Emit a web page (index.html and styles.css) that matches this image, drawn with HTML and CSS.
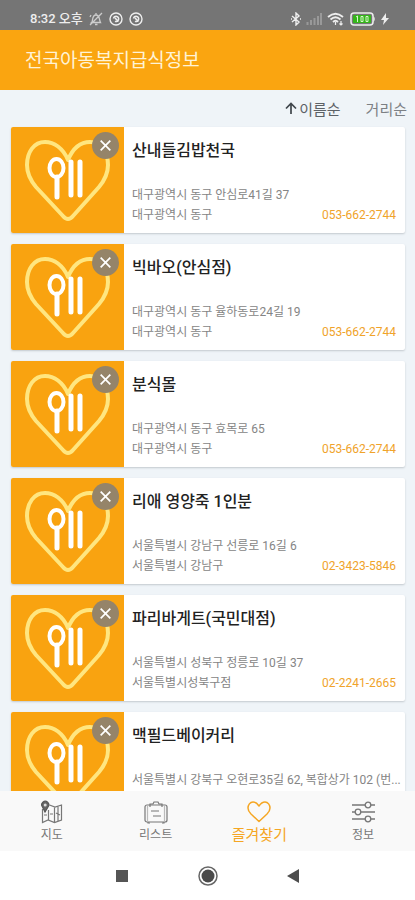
FILE: index.html
```html
<!DOCTYPE html>
<html lang="ko">
<head>
<meta charset="utf-8">
<meta name="viewport" content="width=device-width, initial-scale=1">
<title>전국아동복지급식정보</title>
<link rel="stylesheet" href="styles.css">
</head>
<body>
<svg class="defs" aria-hidden="true">
  <symbol id="meal" viewBox="0 0 113 106">
    <path d="M57 33C52 21 43 15 34 15C23 15 16 25 16 38C16 48 20 54 25 60L52 89Q57 95 62 89L88 60C93 54 97 48 97 38C97 25 90 15 79 15C70 15 62 21 57 33Z" fill="none" stroke="#ffe680" stroke-width="4" stroke-linejoin="round"/>
    <ellipse cx="45.500" cy="41" rx="7" ry="9" fill="none" stroke="#fff" stroke-width="4"/>
    <path d="M46 50V70M60 35V68M69 35V68" fill="none" stroke="#fff" stroke-width="5" stroke-linecap="round"/>
  </symbol>
  <symbol id="close" viewBox="0 0 28 28">
    <path d="M9 9L19 19M19 9L9 19" fill="none" stroke="#fff" stroke-width="1.800"/>
  </symbol>
  <symbol id="talk" viewBox="0 0 14 14">
    <circle cx="7" cy="7" r="6" fill="none" stroke="#eee" stroke-width="1.400"/>
    <path d="M4.500 6.500A2.600 2.600 0 1 1 6 9.300M6 6L9.500 9.500" fill="none" stroke="#eee" stroke-width="1.500"/>
  </symbol>
</svg>
<div class="app">
  <div class="status">
    <div class="status-group">
      <span class="clock">8:32 오후</span>
      <svg width="14" height="14" viewBox="0 0 14 14" fill="none" stroke="#ccc" stroke-width="1.300"><path d="M3 10C4 8 3 3 7 3C11 3 10 8 11.500 10.500H2.500ZM6 12.500H8.500M1 13L13 1M7 1V3M1 5L2 3"/></svg>
      <svg width="14" height="14"><use href="#talk"/></svg>
      <svg width="14" height="14"><use href="#talk"/></svg>
    </div>
    <div class="status-group right">
      <svg width="10" height="14" viewBox="0 0 10 14" fill="none" stroke="#eee" stroke-width="1.400"><path d="M1 4L8 10L5 13V1L8 4L1 10M0 7H1M9 7H10"/></svg>
      <svg width="16" height="12" viewBox="0 0 16 12" fill="none" stroke="#999" stroke-width="2"><path d="M1.500 9V12M5 7V12M8.500 5V12M12 3V12M15 0V12"/></svg>
      <svg width="18" height="14" viewBox="0 0 18 14" fill="none" stroke="#eee" stroke-width="1.800"><path d="M1 5Q8.500 -1.500 16 5M3.500 7.500Q8.500 3 13.500 7.500M6 10Q8.500 7.500 11 10"/><path d="M8.500 10V13M14 9V13M12.500 11.500L14 13L15.500 11.500" stroke-width="1.200"/></svg>
      <svg width="26" height="14" viewBox="0 0 26 14"><rect x="1" y="1" width="22" height="12" rx="3" fill="#777" stroke="#eee" stroke-width="1.500"/><path d="M23.500 4Q26 7 23.500 10Z" fill="#eee"/><rect x="3" y="3" width="18" height="8" rx="1" fill="#35b51b"/><path d="M6 5L7.500 4V10M11 4.500H13V9.500H11ZM16 4.500H18V9.500H16Z" fill="none" stroke="#d9f7cd" stroke-width="1"/></svg>
      <svg width="8" height="12" viewBox="0 0 8 12"><path d="M5 0L0 7H3L2 12L8 5H5Z" fill="#eee"/></svg>
    </div>
  </div>
  <header class="header"><h1>전국아동복지급식정보</h1></header>
  <main class="main">
    <div class="sort">
      <button type="button" class="active"><svg width="12" height="13" viewBox="0 0 12 13" fill="none" stroke="#3f454b" stroke-width="1.700"><path d="M6 12V2M1 6.500L6 1.500L11 6.500"/></svg>이름순</button>
      <button type="button">거리순</button>
    </div>
    <ul class="list">
      <li class="card">
        <div class="thumb"><svg viewBox="0 0 113 106"><use href="#meal"/></svg><button type="button" class="remove" aria-label="삭제"><svg viewBox="0 0 28 28"><use href="#close"/></svg></button></div>
        <div class="info"><h2>산내들김밥천국</h2><p>대구광역시 동구 안심로41길 37</p><div class="foot"><span>대구광역시 동구</span><a href="tel:053-662-2744">053-662-2744</a></div></div>
      </li>
      <li class="card">
        <div class="thumb"><svg viewBox="0 0 113 106"><use href="#meal"/></svg><button type="button" class="remove" aria-label="삭제"><svg viewBox="0 0 28 28"><use href="#close"/></svg></button></div>
        <div class="info"><h2>빅바오(안심점)</h2><p>대구광역시 동구 율하동로24길 19</p><div class="foot"><span>대구광역시 동구</span><a href="tel:053-662-2744">053-662-2744</a></div></div>
      </li>
      <li class="card">
        <div class="thumb"><svg viewBox="0 0 113 106"><use href="#meal"/></svg><button type="button" class="remove" aria-label="삭제"><svg viewBox="0 0 28 28"><use href="#close"/></svg></button></div>
        <div class="info"><h2>분식몰</h2><p>대구광역시 동구 효목로 65</p><div class="foot"><span>대구광역시 동구</span><a href="tel:053-662-2744">053-662-2744</a></div></div>
      </li>
      <li class="card">
        <div class="thumb"><svg viewBox="0 0 113 106"><use href="#meal"/></svg><button type="button" class="remove" aria-label="삭제"><svg viewBox="0 0 28 28"><use href="#close"/></svg></button></div>
        <div class="info"><h2>리애 영양죽 1인분</h2><p>서울특별시 강남구 선릉로 16길 6</p><div class="foot"><span>서울특별시 강남구</span><a href="tel:02-3423-5846">02-3423-5846</a></div></div>
      </li>
      <li class="card">
        <div class="thumb"><svg viewBox="0 0 113 106"><use href="#meal"/></svg><button type="button" class="remove" aria-label="삭제"><svg viewBox="0 0 28 28"><use href="#close"/></svg></button></div>
        <div class="info"><h2>파리바게트(국민대점)</h2><p>서울특별시 성북구 정릉로 10길 37</p><div class="foot"><span>서울특별시성북구점</span><a href="tel:02-2241-2665">02-2241-2665</a></div></div>
      </li>
      <li class="card">
        <div class="thumb"><svg viewBox="0 0 113 106"><use href="#meal"/></svg><button type="button" class="remove" aria-label="삭제"><svg viewBox="0 0 28 28"><use href="#close"/></svg></button></div>
        <div class="info"><h2>맥필드베이커리</h2><p>서울특별시 강북구 오현로35길 62, 복합상가 102 (번...</p></div>
      </li>
    </ul>
  </main>
  <nav class="tabs">
    <a href="#map"><svg width="24" height="24" viewBox="0 0 24 24" fill="none" stroke="#777" stroke-width="1.200"><path d="M2.500 9V22.500L8 20L14.500 22.500L21.500 20V5L15 7L9.500 5M8.500 10V20M14.500 7V22M18 6V21M4 15H7M10 14H13M16 13L20 15"/><path d="M5 12L2.500 7A3.500 3.500 0 1 1 8 7Z" fill="#666" stroke="#555"/><circle cx="5.200" cy="5" r="1.500" fill="#ddd" stroke="none"/></svg>지도</a>
    <a href="#list"><svg width="24" height="24" viewBox="0 0 24 24" fill="none" stroke="#777" stroke-width="1.200"><rect x="1" y="5" width="22" height="17" rx="2"/><path d="M6 7V4H9L10 2H14L15 4H18V7M7 11H15M9 16H17M4 22V23H6M18 23H20V22"/><path d="M3.500 6V21M20.500 6V21" stroke="#bbb"/></svg>리스트</a>
    <a href="#favorites" class="current" aria-current="page"><svg width="24" height="24" viewBox="0 0 24 24" fill="none" stroke="#f5a623" stroke-width="1.500" stroke-linejoin="round"><path d="M12 6C10 3 8 2 6 2C3 2 1 5 1 8C1 11 2 12 4 14L12 21.500L20 14C22 12 23 11 23 8C23 5 21 2 18 2C16 2 14 3 12 6Z"/></svg>즐겨찾기</a>
    <a href="#info"><svg width="24" height="24" viewBox="0 0 24 24" fill="none" stroke="#777" stroke-width="1.300"><path d="M1 5H14M20 5H24M1 12H4M10 12H24M1 19H14M20 19H24"/><circle cx="17" cy="5" r="2.800"/><circle cx="7" cy="12" r="2.800"/><circle cx="17" cy="19" r="2.800"/></svg>정보</a>
  </nav>
  <div class="system">
    <button type="button" aria-label="최근 앱"><svg width="24" height="24" viewBox="0 0 24 24"><rect x="6" y="6" width="12" height="12" fill="#555"/></svg></button>
    <button type="button" aria-label="홈"><svg width="24" height="24" viewBox="0 0 24 24"><circle cx="12" cy="12" r="9" fill="none" stroke="#666" stroke-width="1.500"/><circle cx="12" cy="12" r="6.500" fill="#4a4a4a"/></svg></button>
    <button type="button" aria-label="뒤로"><svg width="24" height="24" viewBox="0 0 24 24"><path d="M5 12L17 5V19Z" fill="#4d4d4d"/></svg></button>
  </div>
</div>
</body>
</html>
```
FILE: styles.css
```css
* {
  box-sizing: border-box;
}

body,
h1,
h2,
p,
ul {
  margin: 0;
  padding: 0;
}

body {
  font-family: Roboto, "Noto Sans CJK KR", sans-serif;
  background: #fff;
}

button {
  font: inherit;
  border: 0;
  padding: 0;
  background: none;
}

a {
  text-decoration: none;
}

svg {
  display: block;
}

.defs {
  display: none;
}

.app {
  display: flex;
  flex-direction: column;
  height: 100vh;
}

.status {
  display: flex;
  justify-content: space-between;
  flex: none;
  height: 30px;
  padding: 8px 26px 0 30px;
  background: #757575;
  color: #eee;
}

.status-group {
  display: flex;
  align-items: center;
  gap: 6px;
  height: 22px;
}

.status-group.right {
  gap: 5px;
}

.clock {
  font-size: 13px;
  font-weight: 500;
  line-height: 20px;
}

.header {
  display: flex;
  align-items: center;
  flex: none;
  height: 60px;
  padding: 2px 25px 0;
  background: #faa510;
}

.header h1 {
  font-size: 19px;
  font-weight: 400;
  line-height: 28px;
  color: #fff3d6;
}

.main {
  flex: 1;
  min-height: 0;
  overflow: hidden;
  background: #eff4f8;
}

.sort {
  display: flex;
  justify-content: flex-end;
  gap: 25px;
  height: 37px;
  padding: 0 8px;
}

.sort button {
  display: flex;
  align-items: center;
  gap: 2px;
  font-size: 15px;
  color: #7c8084;
}

.sort .active {
  color: #5c6166;
}

.list {
  display: flex;
  flex-direction: column;
  gap: 11px;
  padding: 0 10px 11px 11px;
  list-style: none;
}

.card {
  display: flex;
  flex: none;
  height: 106px;
  border-radius: 2px;
  background: #fff;
  box-shadow: 0 1px 2px #c3c9cf;
}

.thumb {
  position: relative;
  flex: none;
  width: 113px;
  border-radius: 2px 0 0 2px;
  background: #f9a310;
}

.remove {
  position: absolute;
  top: 5px;
  right: 5px;
  width: 27px;
  height: 27px;
  border-radius: 50%;
  background: #958469;
}

.info {
  flex: 1;
  min-width: 0;
  padding: 12px 0 0 8px;
  font-size: 12px;
  line-height: 20px;
  color: #858585;
}

.info h2 {
  margin-bottom: 22px;
  font-size: 16px;
  font-weight: 500;
  line-height: 24px;
  color: #222;
}

.info p {
  overflow: hidden;
  white-space: nowrap;
  text-overflow: ellipsis;
}

.foot {
  display: flex;
  justify-content: space-between;
  padding-right: 9px;
}

.foot a {
  color: #f0a32a;
}

.tabs {
  display: grid;
  grid-template-columns: repeat(4, 1fr);
  flex: none;
  height: 60px;
  background: #f9f9f9;
}

.tabs a {
  display: flex;
  flex-direction: column;
  align-items: center;
  padding-top: 9px;
  font-size: 12px;
  line-height: 22px;
  color: #777;
}

.tabs .current {
  font-size: 15px;
  color: #f5a623;
}

.system {
  display: flex;
  justify-content: center;
  gap: 62px;
  flex: none;
  height: 49px;
  background: #fff;
}
```
